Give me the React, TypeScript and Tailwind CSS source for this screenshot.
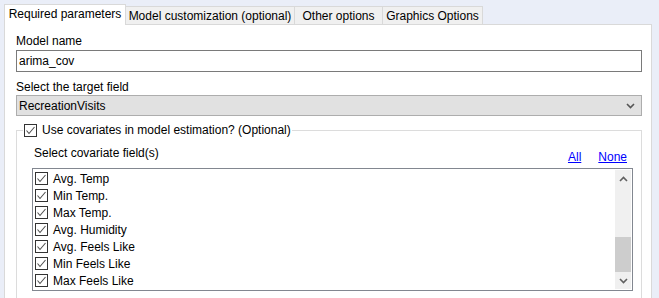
import React from 'react';

const font = { fontFamily: '"Segoe UI", "Liberation Sans", "Noto Sans", sans-serif' };

const tabs = [
  { label: 'Required parameters', w: 'w-[122px]', active: true },
  { label: 'Model customization (optional)', w: 'w-[169px]', active: false },
  { label: 'Other options', w: 'w-[88px]', active: false },
  { label: 'Graphics Options', w: 'w-[100px]', active: false },
];

const fields = [
  'Avg. Temp',
  'Min Temp.',
  'Max Temp.',
  'Avg. Humidity',
  'Avg. Feels Like',
  'Min Feels Like',
  'Max Feels Like',
];

const CheckBox: React.FC = () => (
  <svg width="13" height="13" viewBox="0 0 13 13" className="shrink-0">
    <rect x="0.5" y="0.5" width="12" height="12" fill="#fff" stroke="#333" />
    <polyline points="2.5,6.5 5,9.5 10.5,3" fill="none" stroke="#505050" strokeWidth="1.1" />
  </svg>
);

const Chevron: React.FC<{ up?: boolean; color?: string }> = ({ up, color = '#606060' }) => (
  <svg width="9" height="6" viewBox="0 0 9 6">
    <polyline
      points={up ? '1,5 4.5,1.5 8,5' : '1,1 4.5,4.5 8,1'}
      fill="none"
      stroke={color}
      strokeWidth="1.6"
    />
  </svg>
);

export default function App() {
  return (
    <div
      style={font}
      className="w-[659px] h-[298px] overflow-hidden bg-[#eaeef8] pl-[4px] pt-[4px] text-[12px] leading-[16px] text-black whitespace-nowrap"
    >
      {/* tab strip */}
      <div className="flex items-end h-[20px] w-[648px]">
        {tabs.map((t) =>
          t.active ? (
            <div
              key={t.label}
              className={`${t.w} h-[21px] -mb-[1px] relative z-10 bg-white border border-b-0 border-[#d9d9d9] flex items-center justify-center pb-[2px]`}
            >
              {t.label}
            </div>
          ) : (
            <div
              key={t.label}
              className={`${t.w} h-[18px] bg-[#f0f0f0] border border-l-0 border-b-0 border-[#d9d9d9] flex items-center justify-center`}
            >
              {t.label}
            </div>
          )
        )}
      </div>

      {/* panel */}
      <div className="w-[648px] h-[280px] bg-white border border-[#d9d9d9] pl-[11px] pr-[9px] pt-[8px]">
        <div>Model name</div>
        <div className="mt-[1px] h-[22px] border border-[#7a7a7a] flex items-center px-[2px]">arima_cov</div>

        <div className="mt-[7px]">Select the target field</div>
        <div className="h-[21px] border border-[#adadad] bg-[#e1e1e1] flex items-center justify-between pl-[2px] pr-[6px]">
          <span>RecreationVisits</span>
          <Chevron color="#555" />
        </div>

        <fieldset className="mt-[6px] border border-b-0 border-[#dcdcdc] p-0">
          <legend className="ml-[6px] px-[1px] flex items-center gap-[5px] h-[16px]">
            <CheckBox />
            <span>Use covariates in model estimation? (Optional)</span>
          </legend>

          <div className="pl-[15px] pr-[8px] pb-[10px]">
            <div className="flex items-end justify-between mt-[7px]">
              <span className="ml-[2px]">Select covariate field(s)</span>
              <div className="flex gap-[17px] mr-[6px] translate-y-[4px]">
                <span className="text-[#0000ff] underline">All</span>
                <span className="text-[#0000ff] underline">None</span>
              </div>
            </div>

            <div className="mt-[7px] h-[123px] border border-[#828790] flex">
              <div className="flex-1 pl-[2px] pt-[1px] flex flex-col">
                {fields.map((f) => (
                  <div key={f} className="h-[17px] flex items-center gap-[5px]">
                    <CheckBox />
                    <span>{f}</span>
                  </div>
                ))}
              </div>
              <div className="w-[16px] my-[1px] mr-[1px] bg-[#f0f0f0] flex flex-col">
                <div className="h-[17px] flex items-center justify-center">
                  <Chevron up />
                </div>
                <div className="flex-1 flex flex-col">
                  <div className="h-[50px]" />
                  <div className="h-[35px] bg-[#cdcdcd]" />
                </div>
                <div className="h-[17px] flex items-center justify-center">
                  <Chevron />
                </div>
              </div>
            </div>
          </div>
        </fieldset>
      </div>
    </div>
  );
}
